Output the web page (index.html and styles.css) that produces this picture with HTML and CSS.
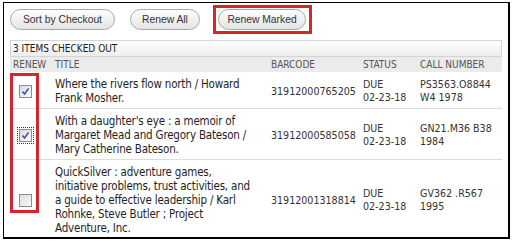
FILE: index.html
```html
<!DOCTYPE html>
<html lang="en">
<head>
  <meta charset="UTF-8" />
  <title>Checked Out</title>
  <link rel="stylesheet" href="styles.css">
</head>
<body>
  <div class="panel">
    <div class="actions">
      <button class="pill sort">Sort by Checkout</button>
      <button class="pill all">Renew All</button>
      <button class="pill marked">Renew Marked</button>
    </div>

    <div class="summary">3 ITEMS CHECKED OUT</div>

    <table class="items">
      <thead>
        <tr>
          <th class="c-renew">RENEW</th>
          <th class="c-title">TITLE</th>
          <th class="c-barcode">BARCODE</th>
          <th class="c-status">STATUS</th>
          <th class="c-call">CALL NUMBER</th>
        </tr>
      </thead>
      <tbody>
        <tr>
          <td class="c-renew"><span class="box on"><svg viewBox="0 0 9 9"><path d="M1.5 4.5 L3.6 7 L7.6 1.4" /></svg></span></td>
          <td class="c-title">Where the rivers flow north / Howard Frank Mosher.</td>
          <td class="c-barcode">31912000765205</td>
          <td class="c-status">DUE<br>02-23-18</td>
          <td class="c-call">PS3563.O8844 W4 1978</td>
        </tr>
        <tr>
          <td class="c-renew"><span class="box on focus"><svg viewBox="0 0 9 9"><path d="M1.5 4.5 L3.6 7 L7.6 1.4" /></svg></span></td>
          <td class="c-title">With a daughter's eye : a memoir of Margaret Mead and Gregory Bateson / Mary Catherine Bateson.</td>
          <td class="c-barcode">31912000585058</td>
          <td class="c-status">DUE<br>02-23-18</td>
          <td class="c-call">GN21.M36 B38 1984</td>
        </tr>
        <tr>
          <td class="c-renew"><span class="box"></span></td>
          <td class="c-title">QuickSilver : adventure games,<br>initiative problems, trust activities, and<br>a guide to effective leadership / Karl<br>Rohnke, Steve Butler ; Project<br>Adventure, Inc.</td>
          <td class="c-barcode">31912001318814</td>
          <td class="c-status">DUE<br>02-23-18</td>
          <td class="c-call">GV362 .R567 1995</td>
        </tr>
      </tbody>
    </table>

    <div class="callout"></div>
  </div>
</body>
</html>
```

FILE: styles.css
```css
body {
  margin: 0;
  background: #fff;
  font-family: "DejaVu Sans Condensed", "DejaVu Sans", sans-serif;
  font-stretch: condensed;
  color: #222;
}
.panel {
  position: relative;
  width: 492px;
  height: 228px;
  margin: 2px 0 0 3px;
  padding: 6px 6px 0 6px;
  border: 1px solid #000;
  border-right-width: 2px;
  border-bottom-width: 2px;
  overflow: hidden;
}
.actions {
  display: flex;
  gap: 15px;
  height: 21px;
}
.pill {
  position: relative;
  height: 21px;
  padding: 0;
  border: 1px solid #a8a8a8;
  border-radius: 11px;
  background: linear-gradient(#fdfdfd, #e4e4e4);
  font-family: "Liberation Sans", Arial, sans-serif;
  font-size: 10.3px;
  color: #333;
}
.pill.sort { width: 105px; }
.pill.all { width: 70px; }
.pill.marked {
  width: 88px;
  margin-left: 3px;
}
.pill.marked::after {
  content: "";
  position: absolute;
  top: -5px;
  left: -6px;
  right: -7px;
  bottom: -5px;
  border: 3px solid #d7242d;
}
.summary {
  margin-top: 10px;
  height: 15px;
  line-height: 15px;
  padding-left: 2px;
  border: 1px solid #d4d4d4;
  background: linear-gradient(#ffffff, #ededed);
  font-size: 10px;
  color: #1a1a1a;
}
.items {
  width: 492px;
  border-collapse: collapse;
  table-layout: fixed;
}
.items th {
  height: 15px;
  padding: 0 3px;
  background: #ebebeb;
  text-align: left;
  font-weight: normal;
  font-size: 10px;
  color: #555;
  white-space: nowrap;
}
.items td {
  padding: 5px 3px 3px;
  border-bottom: 1px solid #dcdcdc;
  vertical-align: middle;
  font-size: 10.6px;
  line-height: 13px;
  color: #333;
}
.items td.c-title {
  font-size: 11.5px;
  letter-spacing: -0.2px;
  line-height: 14px;
  color: #1e1e1e;
}
.items tr:last-child td {
  border-bottom: none;
}
.c-renew { width: 36px; }
.c-title { width: 210px; }
.c-barcode { width: 86px; }
.c-status { width: 51px; }
.c-call { width: auto; }
.box {
  display: block;
  width: 11px;
  height: 11px;
  margin-left: 6px;
  border: 1px solid #8c8c8c;
  background: linear-gradient(135deg, #dcdcdc, #fbfbfb);
}
.box svg {
  display: block;
  width: 9px;
  height: 9px;
  margin: 1px;
}
.box path {
  fill: none;
  stroke: #3b4fb8;
  stroke-width: 1.6;
}
.box.focus {
  outline: 1px dotted #333;
  outline-offset: 1px;
}
.callout {
  position: absolute;
  left: 6px;
  top: 70px;
  width: 23px;
  height: 134px;
  border: 3px solid #d7242d;
}
```
